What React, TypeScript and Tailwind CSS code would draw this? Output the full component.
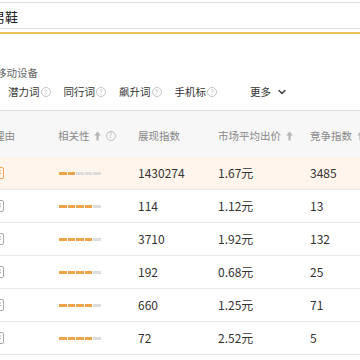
import { ChevronDown } from 'lucide-react';

const FONT = { fontFamily: '"Noto Sans CJK SC", "Noto Sans", sans-serif' };

const ROWS = [
  { rel: 2, show: '1430274', price: '1.67元', comp: '3485', active: true },
  { rel: 4, show: '114', price: '1.12元', comp: '13' },
  { rel: 4, show: '3710', price: '1.92元', comp: '132' },
  { rel: 4, show: '192', price: '0.68元', comp: '25' },
  { rel: 4, show: '660', price: '1.25元', comp: '71' },
  { rel: 4, show: '72', price: '2.52元', comp: '5' },
];

const TABS = ['潜力词', '同行词', '飙升词', '手机标'];

function Help() {
  return (
    <span className="inline-flex items-center justify-center w-[10px] h-[10px] rounded-full border border-[#c4c4c4] text-[7px] leading-none text-[#bbb] ml-[1px]">
      ?
    </span>
  );
}

function SortUp() {
  return (
    <svg width="7" height="10" viewBox="0 0 7 10" className="inline-block shrink-0">
      <path d="M3.5 0.5 L6.8 4.5 L4.6 4.5 L4.6 9.5 L2.4 9.5 L2.4 4.5 L0.2 4.5 Z" fill="#b5b5b5" />
    </svg>
  );
}

function DocIcon({ active }: { active?: boolean }) {
  const c = active ? '#f0a35a' : '#a9a9a9';
  return (
    <svg width="11" height="12" viewBox="0 0 11 12">
      <rect x="0.5" y="0.5" width="10" height="11" rx="1.5" fill="none" stroke={c} />
      <path d="M3 4 H8 M3 6.5 H8 M3 9 H6.5" stroke={c} strokeWidth="1" />
    </svg>
  );
}

function RelBar({ n }: { n: number }) {
  return (
    <div className="flex gap-[1px]">
      {[0, 1, 2, 3, 4].map((i) => (
        <span key={i} className={`w-[7.5px] h-[3px] ${i < n ? 'bg-[#eda348]' : 'bg-[#dcdcdc]'}`} />
      ))}
    </div>
  );
}

export default function App() {
  return (
    <div className="w-[360px] h-[360px] overflow-hidden bg-white text-[#333]" style={FONT}>
      {/* 搜索框 */}
      <div className="mt-[2px] h-[27px] pt-[3px] border-t border-b border-[#dedede] flex items-center -ml-[8px]">
        <span className="text-[13px] text-[#222]">男鞋</span>
      </div>
      <div className="mt-[3px] h-[2px] bg-[#f1c15a]" />

      {/* 筛选 */}
      <div className="mt-[31px] -ml-[4px] text-[10.5px] leading-[16px] text-[#666]">移动设备</div>
      <div className="mt-[3px] pb-[10px] border-b border-[#dcdcdc] flex items-center text-[10.5px] leading-[16px] text-[#333]">
        {TABS.map((t, i) => (
          <span key={t} className={`flex items-center ${i === 0 ? 'ml-[8px]' : 'ml-[13px]'}`}>
            {t}
            <Help />
          </span>
        ))}
        <span className="ml-[33px] flex items-center gap-[5px]">
          更多
          <ChevronDown size={12} strokeWidth={3} color="#444" />
        </span>
      </div>

      {/* 表格 */}
      <div className="-ml-[12px] w-[380px]">
        <div className="h-[46px] pt-[3px] bg-[#f7f7f7] flex items-center text-[10.5px] text-[#888]">
          <div className="w-[70px] pl-[6px]">理由</div>
          <div className="w-[80px] flex items-center gap-[4px]">
            相关性
            <SortUp />
            <Help />
          </div>
          <div className="w-[80px]">展现指数</div>
          <div className="w-[92px] flex items-center gap-[5px]">
            市场平均出价
            <SortUp />
          </div>
          <div className="flex-1 flex items-center gap-[5px]">
            竞争指数
            <SortUp />
          </div>
        </div>
        {ROWS.map((r, i) => (
          <div
            key={i}
            className={`h-[33px] border-b border-[#e9e9e9] flex items-center text-[12px] ${
              r.active ? 'bg-[#fff5ec]' : 'bg-white'
            }`}
          >
            <div className="w-[70px] pl-[5px] flex items-center">
              <DocIcon active={r.active} />
            </div>
            <div className="w-[80px] pl-[1px]">
              <RelBar n={r.rel} />
            </div>
            <div className="w-[80px]">{r.show}</div>
            <div className="w-[92px]">{r.price}</div>
            <div className="flex-1">{r.comp}</div>
          </div>
        ))}
      </div>
    </div>
  );
}
